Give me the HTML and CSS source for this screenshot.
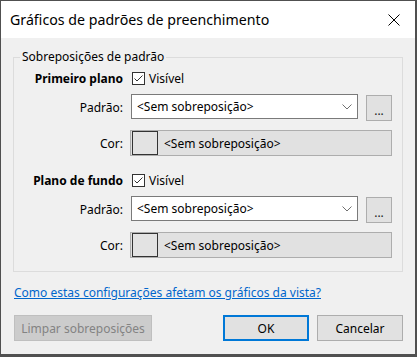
FILE: index.html
```html
<!DOCTYPE html>
<html lang="pt">
<head>
    <meta charset="UTF-8">
    <title>Gráficos de padrões de preenchimento</title>
    <link rel="stylesheet" href="styles.css">
</head>
<body>
    <div class="window">
        <div class="titlebar">
            <span class="title">Gráficos de padrões de preenchimento</span>
            <svg class="close" width="12" height="12" viewBox="0 0 12 12">
                <path d="M0.5 0.5L11.5 11.5M11.5 0.5L0.5 11.5" stroke="#000" stroke-width="1" fill="none"/>
            </svg>
        </div>

        <div class="content">
            <fieldset class="group">
                <legend>Sobreposições de padrão</legend>

                <div class="layer">
                    <div class="row row-head">
                        <div class="lbl head">Primeiro plano</div>
                        <label class="check">
                            <span class="box">
                                <svg width="11" height="11" viewBox="0 0 11 11"><path d="M1.5 5.5L4 8L9.5 2.5" stroke="#333" stroke-width="1" fill="none"/></svg>
                            </span>
                            Visível
                        </label>
                    </div>
                    <div class="row row-combo">
                        <div class="lbl">Padrão:</div>
                        <div class="combo">
                            <span>&lt;Sem sobreposição&gt;</span>
                            <svg class="chev" width="10" height="6" viewBox="0 0 10 6"><path d="M0.5 0.5L5 5L9.5 0.5" stroke="#707070" stroke-width="1" fill="none"/></svg>
                        </div>
                        <button class="more">...</button>
                    </div>
                    <div class="row row-color">
                        <div class="lbl">Cor:</div>
                        <div class="color">
                            <span class="swatch"></span>
                            <span>&lt;Sem sobreposição&gt;</span>
                        </div>
                    </div>
                </div>

                <div class="layer layer-bg">
                    <div class="row row-head">
                        <div class="lbl head">Plano de fundo</div>
                        <label class="check">
                            <span class="box">
                                <svg width="11" height="11" viewBox="0 0 11 11"><path d="M1.5 5.5L4 8L9.5 2.5" stroke="#333" stroke-width="1" fill="none"/></svg>
                            </span>
                            Visível
                        </label>
                    </div>
                    <div class="row row-combo">
                        <div class="lbl">Padrão:</div>
                        <div class="combo">
                            <span>&lt;Sem sobreposição&gt;</span>
                            <svg class="chev" width="10" height="6" viewBox="0 0 10 6"><path d="M0.5 0.5L5 5L9.5 0.5" stroke="#707070" stroke-width="1" fill="none"/></svg>
                        </div>
                        <button class="more">...</button>
                    </div>
                    <div class="row row-color">
                        <div class="lbl">Cor:</div>
                        <div class="color">
                            <span class="swatch"></span>
                            <span>&lt;Sem sobreposição&gt;</span>
                        </div>
                    </div>
                </div>
            </fieldset>

            <a class="help" href="#">Como estas configurações afetam os gráficos da vista?</a>

            <div class="actions">
                <button class="btn clear" disabled>Limpar sobreposições</button>
                <button class="btn ok">OK</button>
                <button class="btn cancel">Cancelar</button>
            </div>
        </div>
    </div>
</body>
</html>
```

FILE: styles.css
```css
body {
    margin: 0;
    font-family: 'Noto Sans', 'DejaVu Sans', sans-serif;
    font-size: 12px;
    color: #000;
}
.window {
    width: 417px;
    height: 357px;
    box-sizing: border-box;
    border-style: solid;
    border-color: #505050;
    border-width: 1px 2px 3px 1px;
    background: #f0f0f0;
}
.titlebar {
    height: 37px;
    background: #fff;
    display: flex;
    align-items: center;
    padding: 0 15px 0 9px;
}
.title {
    font-size: 14.2px;
    flex: 1;
}
.close {
    display: block;
}
.content {
    padding-top: 11px;
}
.group {
    margin: 0 0 0 12px;
    width: 390px;
    box-sizing: border-box;
    border: 1px solid #dcdcdc;
    padding: 3px 10px 13px 0;
    min-width: 0;
}
.group legend {
    margin-left: 6px;
    padding: 0 2px;
    line-height: 16px;
}
.row {
    display: grid;
    grid-template-columns: 109px 227px 26px;
    column-gap: 8px;
    align-items: center;
}
.row-head {
    height: 20px;
}
.row-combo {
    height: 26px;
    margin-top: 6px;
}
.row-color {
    height: 26px;
    margin-top: 10px;
}
.layer-bg {
    margin-top: 14px;
}
.lbl {
    text-align: right;
}
.head {
    font-weight: bold;
}
.check {
    display: flex;
    align-items: center;
    grid-column: 2 / 4;
    margin-left: 1px;
}
.box {
    width: 13px;
    height: 13px;
    box-sizing: border-box;
    border: 1px solid #333;
    background: #fff;
    margin-right: 4px;
    display: flex;
}
.combo {
    height: 25px;
    align-self: start;
    box-sizing: border-box;
    border: 1px solid #7a7a7a;
    background: #fff;
    display: flex;
    align-items: center;
    padding: 0 4px 0 5px;
}
.combo span {
    flex: 1;
}
.chev {
    margin-right: 1px;
}
.more {
    width: 26px;
    height: 26px;
    box-sizing: border-box;
    border: 1px solid #adadad;
    background: #e1e1e1;
    padding: 6px 0 0;
    font-family: inherit;
    font-size: 12px;
    color: #222;
    line-height: 12px;
    margin-top: 1px;
}
.color {
    grid-column: 2 / 4;
    margin-left: -1px;
    height: 26px;
    box-sizing: border-box;
    border: 1px solid #adadad;
    background: #e1e1e1;
    display: flex;
    align-items: center;
    padding-left: 1px;
}
.swatch {
    width: 26px;
    height: 24px;
    box-sizing: border-box;
    border: 1px solid #333;
    background: #e3e3e3;
    margin-right: 6px;
}
.help {
    display: block;
    margin: 13px 0 0 13px;
    line-height: 16px;
    color: #0066cc;
    width: max-content;
}
.actions {
    display: flex;
    margin-top: 14px;
    padding: 0 12px 0 13px;
}
.btn {
    height: 26px;
    box-sizing: border-box;
    border: 1px solid #adadad;
    background: #e1e1e1;
    font-family: inherit;
    font-size: 12px;
    color: #000;
    padding: 0;
}
.clear {
    width: 138px;
    margin-right: auto;
    background: #cccccc;
    border-color: #bfbfbf;
    color: #838383;
}
.ok {
    width: 86px;
    border: 2px solid #0078d7;
}
.cancel {
    width: 86px;
    margin-left: 8px;
}
```
